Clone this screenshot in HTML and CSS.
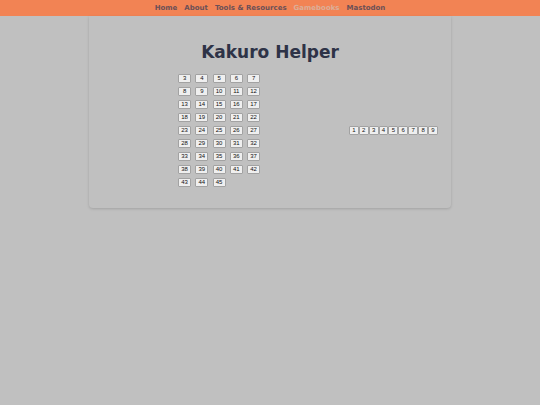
FILE: index.html
```
<!DOCTYPE html>
<html lang="en">
<head>
<meta charset="utf-8">
<title>Kakuro Helper</title>
<link rel="stylesheet" href="styles.css">
</head>
<body>
<nav class="nav">
<a href="#">Home</a>
<a href="#">About</a>
<a href="#">Tools &amp; Resources</a>
<a href="#" class="muted">Gamebooks</a>
<a href="#">Mastodon</a>
</nav>
<main class="panel">
<h1>Kakuro Helper</h1>
<div class="helper">
<div class="sums">
<button>3</button><button>4</button><button>5</button><button>6</button><button>7</button>
<button>8</button><button>9</button><button>10</button><button>11</button><button>12</button>
<button>13</button><button>14</button><button>15</button><button>16</button><button>17</button>
<button>18</button><button>19</button><button>20</button><button>21</button><button>22</button>
<button>23</button><button>24</button><button>25</button><button>26</button><button>27</button>
<button>28</button><button>29</button><button>30</button><button>31</button><button>32</button>
<button>33</button><button>34</button><button>35</button><button>36</button><button>37</button>
<button>38</button><button>39</button><button>40</button><button>41</button><button>42</button>
<button>43</button><button>44</button><button>45</button>
</div>
<div class="digits">
<button>1</button><button>2</button><button>3</button><button>4</button><button>5</button><button>6</button><button>7</button><button>8</button><button>9</button>
</div>
</div>
</main>
</body>
</html>
```
FILE: styles.css
```
* {
  box-sizing: border-box;
}

body {
  min-height: 100vh;
  margin: 0;
  background: #c0c0c0;
  color: #2e3347;
  font-family: "DejaVu Sans", Verdana, sans-serif;
}

.nav {
  display: flex;
  justify-content: center;
  gap: 7px;
  padding: 4px 0;
  background: #f28354;
  font-size: 7px;
  font-weight: bold;
  line-height: 8px;
}

.nav a {
  color: #6c5057;
  text-decoration: none;
}

.nav .muted {
  color: #dcae98;
}

.panel {
  width: 67%;
  margin: 0 auto;
  padding: 24px 13px 21px 89px;
  border-radius: 0 0 4px 4px;
  box-shadow: 0 1px 3px rgba(0, 0, 0, 0.16);
}

h1 {
  margin: 0 76px 10px 0;
  font-size: 17px;
  line-height: 24px;
  text-align: center;
  white-space: nowrap;
}

.helper {
  display: flex;
  justify-content: space-between;
  align-items: center;
}

.sums {
  display: grid;
  grid-template-columns: repeat(5, 13px);
  justify-content: space-between;
  row-gap: 4px;
  width: 82px;
}

.digits {
  display: grid;
  grid-template-columns: repeat(9, 1fr);
  width: 89px;
}

button {
  height: 9px;
  min-width: 0;
  padding: 0;
  border: 1px solid #a2a2a2;
  border-radius: 1px;
  background: #efefef;
  color: #111;
  font: 6px/7px "Liberation Sans", Arial, sans-serif;
}
```
